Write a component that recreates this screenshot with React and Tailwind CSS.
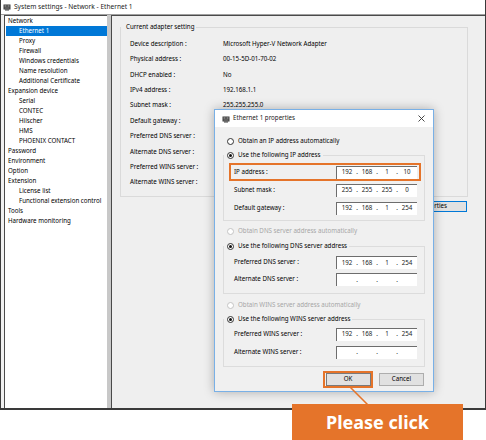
import React from "react";

const font = { fontFamily: '"Noto Sans", "Liberation Sans", sans-serif' };

function AppIcon() {
  return (
    <svg width="8" height="8" viewBox="0 0 8 8" className="shrink-0">
      <rect x="0.5" y="1.5" width="7" height="5" fill="#3a3a3a" />
      <rect x="1.5" y="2.5" width="2" height="1" fill="#bbb" />
      <rect x="4.5" y="2.5" width="2" height="1" fill="#bbb" />
      <rect x="1.5" y="4.5" width="5" height="1" fill="#888" />
      <rect x="2" y="6.5" width="4" height="1" fill="#3a3a3a" />
    </svg>
  );
}

const tree = [
  ["Network", 0],
  ["Ethernet 1", 1, true],
  ["Proxy", 1],
  ["Firewall", 1],
  ["Windows credentials", 1],
  ["Name resolution", 1],
  ["Additional Certificate", 1],
  ["Expansion device", 0],
  ["Serial", 1],
  ["CONTEC", 1],
  ["Hilscher", 1],
  ["HMS", 1],
  ["PHOENIX CONTACT", 1],
  ["Password", 0],
  ["Environment", 0],
  ["Option", 0],
  ["Extension", 0],
  ["License list", 1],
  ["Functional extension control", 1],
  ["Tools", 0],
  ["Hardware monitoring", 0],
];

const rows = [
  ["Device description :", "Microsoft Hyper-V Network Adapter"],
  ["Physical address :", "00-15-5D-01-70-02"],
  ["DHCP enabled :", "No"],
  ["IPv4 address :", "192.168.1.1"],
  ["Subnet mask :", "255.255.255.0"],
  ["Default gateway :", ""],
  ["Preferred DNS server :", ""],
  ["Alternate DNS server :", ""],
  ["Preferred WINS server :", ""],
  ["Alternate WINS server :", ""],
];

function Radio({ checked, disabled }) {
  return (
    <span
      className={`w-[7px] h-[7px] rounded-full border bg-white flex items-center justify-center shrink-0 ${
        disabled ? "border-[#c4c4c4]" : "border-[#333]"
      }`}
    >
      {checked && <span className="w-[3px] h-[3px] rounded-full bg-[#111]" />}
    </span>
  );
}

function IpInput({ v }) {
  const parts = v || ["", "", "", ""];
  return (
    <div className="w-[81px] h-[13px] bg-white border-t border-l border-[#6d6d6d] flex items-center px-[2px] text-[#222]">
      {parts.map((p, i) => (
        <React.Fragment key={i}>
          <span className="w-[16px] text-center">{p}</span>
          {i < 3 && <span className="w-[4px] text-center">.</span>}
        </React.Fragment>
      ))}
    </div>
  );
}

function FieldRow({ label, v, h, highlight }) {
  return (
    <div
      className={`ml-[5px] w-[192px] flex items-center justify-between pl-[3px] pr-[2px] border-2 ${
        highlight ? "border-[#e5742a]" : "border-transparent"
      } ${h}`}
    >
      <span>{label}</span>
      <IpInput v={v} />
    </div>
  );
}

function GroupHeader({ text }) {
  return (
    <div className="-mt-[6px] h-[10px] flex items-center gap-[4px] pl-[3px] pr-[2px] bg-[#f0f0f0] w-fit">
      <Radio checked />
      <span>{text}</span>
    </div>
  );
}

function DisabledRadio({ text, cls }) {
  return (
    <div className={`h-[10px] flex items-center gap-[4px] pl-[12px] text-[#a6a6a6] ${cls}`}>
      <Radio disabled />
      <span>{text}</span>
    </div>
  );
}

function Dialog() {
  return (
    <div className="absolute left-[214px] top-[109px] w-[220px] h-[283px] border border-[#79b0e6] bg-[#f0f0f0] shadow-[0_0_10px_rgba(0,0,0,0.28)] flex flex-col">
      <div className="h-[17px] bg-white flex items-center pl-[7px] pr-[8px] shrink-0">
        <AppIcon />
        <span className="ml-[3px] text-[#222]">Ethernet 1 properties</span>
        <svg width="7" height="7" viewBox="0 0 7 7" className="ml-auto">
          <path d="M0.5 0.5 L6.5 6.5 M6.5 0.5 L0.5 6.5" stroke="#333" strokeWidth="0.9" />
        </svg>
      </div>
      <div className="flex flex-col pt-[9px]">
        <div className="h-[10px] flex items-center gap-[4px] pl-[12px]">
          <Radio />
          <span>Obtain an IP address automatically</span>
        </div>
        <div className="mt-[9px] mx-[8px] border border-[#dcdcdc] pb-[3px]">
          <GroupHeader text="Use the following IP address" />
          <div className="mt-[3px]" />
          <FieldRow label="IP address :" v={["192", "168", "1", "10"]} h="h-[18px]" highlight />
          <FieldRow label="Subnet mask :" v={["255", "255", "255", "0"]} h="h-[18px]" />
          <FieldRow label="Default gateway :" v={["192", "168", "1", "254"]} h="h-[18px]" />
        </div>
        <DisabledRadio text="Obtain DNS server address automatically" cls="mt-[5px]" />
        <div className="mt-[10px] mx-[8px] border border-[#dcdcdc] pb-[5px]">
          <GroupHeader text="Use the following DNS server address" />
          <div className="mt-[3px]" />
          <FieldRow label="Preferred DNS server :" v={["192", "168", "1", "254"]} h="h-[17px]" />
          <FieldRow label="Alternate DNS server :" h="h-[17px]" />
        </div>
        <DisabledRadio text="Obtain WINS server address automatically" cls="mt-[6px]" />
        <div className="mt-[9px] mx-[8px] border border-[#dcdcdc] pb-[5px]">
          <GroupHeader text="Use the following WINS server address" />
          <div className="mt-[1px]" />
          <FieldRow label="Preferred WINS server :" v={["192", "168", "1", "254"]} h="h-[18px]" />
          <FieldRow label="Alternate WINS server :" h="h-[18px]" />
        </div>
        <div className="mt-[4px] h-[17px] flex items-center justify-end gap-[6px] pr-[9px]">
          <div className="w-[50px] h-[17px] border-2 border-[#e5742a] flex items-center justify-center">
            <div className="w-[45px] h-[13px] bg-[#e1e1e1] border border-[#7a7a7a] flex items-center justify-center">
              OK
            </div>
          </div>
          <div className="w-[45px] h-[13px] bg-[#e1e1e1] border border-[#adadad] flex items-center justify-center">
            Cancel
          </div>
        </div>
      </div>
    </div>
  );
}

export default function App() {
  return (
    <div className="relative w-[486px] h-[440px] bg-white text-[6.2px] leading-none text-black" style={font}>
      <div className="w-[486px] h-[410px] border-l border-r border-b-2 border-[#3a3a3a] flex flex-col">
        <div className="h-[15px] bg-white border-b border-[#a0a0a0] flex items-center pl-[2px] gap-[3px] shrink-0">
          <AppIcon />
          <span className="text-[6.6px] text-[#222]">System settings - Network - Ethernet 1</span>
        </div>
        <div className="flex-1 flex bg-[#f0f0f0] pl-[3px]">
          <div className="w-[103px] bg-white border-l border-t border-[#4a4a4a] flex flex-col">
            {tree.map(([t, lvl, sel]) => (
              <div
                key={t}
                className={`h-[10px] flex items-center ml-[1px] ${lvl ? "pl-[13px]" : "pl-[2px]"} ${
                  sel ? "bg-[#0078d7] text-white" : ""
                }`}
              >
                {t}
              </div>
            ))}
          </div>
          <div className="w-[4px] bg-[#c8c8c8]" />
          <div className="flex-1 bg-[#efefef] border-l border-t border-[#4a4a4a] flex flex-col">
            <div className="mt-[11px] ml-[8px] mr-[17px] border border-[#dadada] pb-[5.7px] flex flex-col">
              <div className="-mt-[6px] h-[10px] flex items-center pl-[5px] pr-[2px] bg-[#efefef] w-fit">
                Current adapter setting
              </div>
              <div className="mt-[4.3px]" />
              {rows.map(([l, v]) => (
                <div key={l} className="h-[15.4px] flex items-center pl-[9px]">
                  <span className="w-[93px]">{l}</span>
                  <span>{v}</span>
                </div>
              ))}
            </div>
            <div className="mt-[4px] self-end mr-[18px] w-[70px] h-[11px] bg-[#e1e1e1] border border-[#0078d7] flex items-center justify-center">
              Properties
            </div>
          </div>
        </div>
      </div>
      <Dialog />
      <svg className="absolute left-0 top-0" width="486" height="440" style={{ pointerEvents: "none" }}>
        <line x1="350" y1="387" x2="368" y2="405" stroke="#e5742a" strokeWidth="1.6" />
      </svg>
      <div className="absolute left-[292px] top-[404px] w-[171px] h-[36px] bg-[#e5742a] flex items-center justify-center text-white text-[18px] font-bold">
        Please click
      </div>
    </div>
  );
}
